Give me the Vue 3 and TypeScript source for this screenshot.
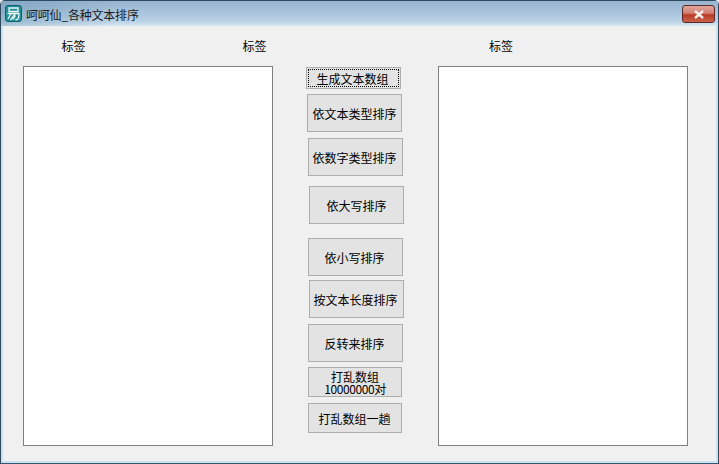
<script setup lang="ts">
interface Btn { label: string; cls: string; sub?: string }
const buttons: Btn[] = [
  { label: '生成文本数组', cls: 'b1' },
  { label: '依文本类型排序', cls: 'b2' },
  { label: '依数字类型排序', cls: 'b3' },
  { label: '依大写排序', cls: 'b4' },
  { label: '依小写排序', cls: 'b5' },
  { label: '按文本长度排序', cls: 'b6' },
  { label: '反转来排序', cls: 'b7' },
  { label: '打乱数组', sub: '10000000对', cls: 'b8' },
  { label: '打乱数组一趟', cls: 'b9' },
]
</script>

<template>
  <div class="window">
    <header class="titlebar">
      <svg class="logo" width="17" height="17" viewBox="0 0 17 17">
        <rect x="0.5" y="0.5" width="16" height="16" rx="2.5" fill="#1f8f98" stroke="#125f72" />
        <path d="M4 3H13V6.5H4ZM2.5 8.5H14.5M6 8.5L3 14M10 9L5.5 15M14 9Q14 15 10.5 15M10.5 10.5L8 14.5" fill="none" stroke="#eef8f6" stroke-width="1.3" />
      </svg>
      <span class="title">呵呵仙_各种文本排序</span>
      <button class="close" aria-label="关闭">
        <svg width="12" height="9" viewBox="0 0 12 9"><path d="M2 1L10 8M10 1L2 8" stroke="#f6f1ee" stroke-width="2.4" fill="none" /></svg>
      </button>
    </header>
    <main class="client">
      <div class="labels">
        <span class="lab l1">标签</span>
        <span class="lab l2">标签</span>
        <span class="lab l3">标签</span>
      </div>
      <div class="content">
        <div class="list"></div>
        <div class="actions">
          <button v-for="b in buttons" :key="b.cls" class="act" :class="b.cls">
            <span class="txt">{{ b.label }}</span>
            <span v-if="b.sub" class="sub">{{ b.sub }}</span>
          </button>
        </div>
        <div class="list"></div>
      </div>
    </main>
  </div>
</template>

<style>
html, body { margin: 0; padding: 0; background: #f0f0f0; overflow: hidden; }
</style>

<style scoped>
.window {
  width: 719px;
  height: 464px;
  box-sizing: border-box;
  display: flex;
  flex-direction: column;
  background: #cfe0ee;
  border: 1px solid #2f4a5c;
  border-bottom-color: #2f5a70;
  border-radius: 5px 5px 0 0;
  font-family: "Noto Sans CJK SC", "Liberation Sans", sans-serif;
  font-size: 12px;
  color: #000;
  padding-bottom: 2px;
}
.titlebar {
  height: 25px;
  flex: none;
  display: flex;
  align-items: flex-start;
  padding: 0 3px 0 4px;
  background:
    linear-gradient(90deg, rgba(90, 140, 170, 0.35) 0, rgba(90, 140, 170, 0) 120px),
    linear-gradient(180deg, #98b5d1 0%, #a9c3db 45%, #bed5e8 85%, #dde9f3 100%);
}
.logo { flex: none; margin-top: 4px; }
.title { margin-left: 4px; margin-top: 6px; line-height: 16px; color: #1c1c1c; letter-spacing: -0.2px; }
.close {
  margin-left: auto;
  margin-top: 4px;
  width: 33px;
  height: 18px;
  padding: 0;
  display: flex;
  align-items: center;
  justify-content: center;
  border: 1px solid #5c2a25;
  border-radius: 3px;
  background: linear-gradient(180deg, #dfa79b 0%, #d18072 45%, #bb3a26 55%, #c9634c 100%);
}
.client {
  flex: 1;
  margin: 0 2px 0 2px;
  background: #f0f0f0;
  display: flex;
  flex-direction: column;
}
.labels { height: 40px; display: flex; align-items: center; padding-left: 58.5px; }
.lab { width: 24px; line-height: 16px; }
.l2 { margin-left: 157px; }
.l3 { margin-left: 222.5px; }
.content { display: flex; padding-left: 20px; }
.list {
  width: 250px;
  height: 380px;
  box-sizing: border-box;
  background: #fff;
  border: 1px solid #808080;
}
.actions {
  width: 165px;
  flex: none;
  display: flex;
  flex-direction: column;
  align-items: flex-start;
}
.act {
  box-sizing: border-box;
  width: 95px;
  padding: 2px 2px 0 0;
  display: flex;
  flex-direction: column;
  align-items: center;
  justify-content: center;
  background: #e3e3e3;
  border: 1px solid #adadad;
  font: inherit;
  color: #000;
}
.txt { line-height: 14px; }
.sub { line-height: 11px; letter-spacing: -0.4px; }
.b1 { height: 22px; margin: 1px 0 0 33px; outline: 1px dotted #000; outline-offset: -3px; }
.b2 { height: 38px; margin: 5px 0 0 34px; padding-right: 0; }
.b3 { height: 38px; margin: 6px 0 0 35px; }
.b4 { height: 38px; margin: 10px 0 0 36px; padding-right: 0; }
.b5 { height: 38px; margin: 14px 0 0 35px; }
.b6 { height: 38px; margin: 4px 0 0 36px; }
.b7 { height: 38px; margin: 6px 0 0 35px; }
.b8 { height: 30px; width: 94px; margin: 5px 0 0 35px; padding: 0 0 1px 0; }
.b8 .txt { line-height: 13px; }
.b8 .sub { line-height: 11px; }
.b9 { height: 30px; width: 94px; margin: 6px 0 0 35px; padding: 1px 1px 0 0; }
</style>
